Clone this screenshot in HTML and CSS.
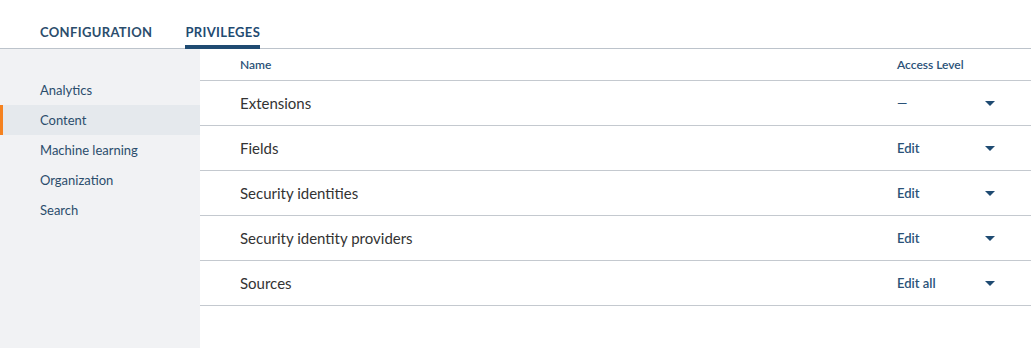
FILE: index.html
```html
<!DOCTYPE html>
<html>
<head>
<meta charset="utf-8">
<link rel="stylesheet" href="styles.css">
</head>
<body>
<div class="tabs">
  <div class="tab">CONFIGURATION</div>
  <div class="tab active">PRIVILEGES</div>
</div>
<div class="main">
  <nav class="side">
    <div class="item">Analytics</div>
    <div class="item active">Content</div>
    <div class="item">Machine learning</div>
    <div class="item">Organization</div>
    <div class="item">Search</div>
  </nav>
  <div class="table">
    <div class="row head">
      <div class="name">Name</div>
      <div class="access">Access Level</div>
    </div>
    <div class="row">
      <div class="name">Extensions</div>
      <div class="access"><span class="val">—</span><span class="caret"></span></div>
    </div>
    <div class="row">
      <div class="name">Fields</div>
      <div class="access"><span class="val">Edit</span><span class="caret"></span></div>
    </div>
    <div class="row">
      <div class="name">Security identities</div>
      <div class="access"><span class="val">Edit</span><span class="caret"></span></div>
    </div>
    <div class="row">
      <div class="name">Security identity providers</div>
      <div class="access"><span class="val">Edit</span><span class="caret"></span></div>
    </div>
    <div class="row">
      <div class="name">Sources</div>
      <div class="access"><span class="val">Edit all</span><span class="caret"></span></div>
    </div>
  </div>
</div>
</body>
</html>
```
FILE: styles.css
```css
* { box-sizing: border-box; }
html, body { margin: 0; height: 100%; }
body {
  font-family: Lato, "Noto Sans", sans-serif;
  background: #fff;
  display: flex;
  flex-direction: column;
  overflow: hidden;
}
.tabs {
  display: flex;
  gap: 33px;
  padding-left: 40px;
  border-bottom: 1px solid #bcc3cb;
  height: 49px;
}
.tab {
  font-size: 13px;
  font-weight: 700;
  line-height: 16px;
  letter-spacing: 0.35px;
  color: #2b4d6c;
  padding-top: 24px;
  height: 49px;
  margin-bottom: -1px;
  border-bottom: 4px solid transparent;
}
.tab.active {
  color: #1f4b72;
  border-bottom-color: #1f4b72;
}
.main {
  flex: 1;
  display: flex;
}
.side {
  width: 200px;
  flex: none;
  background: #f1f2f4;
  padding-top: 26px;
}
.item {
  height: 30px;
  line-height: 30px;
  padding-left: 40px;
  font-size: 13px;
  color: #2b4d6c;
  border-left: 3px solid transparent;
  text-indent: -3px;
}
.item.active {
  background: #e5e9ed;
  border-left-color: #f58220;
}
.table {
  flex: 1;
}
.row {
  display: flex;
  align-items: center;
  height: 45px;
  border-bottom: 1px solid #c4c9cf;
}
.row.head {
  height: 32px;
}
.name {
  flex: 1;
  padding-left: 40px;
  font-size: 15px;
  color: #333;
}
.head .name, .head .access {
  font-size: 12px;
  font-weight: 600;
  color: #2b5278;
}
.access {
  width: 134px;
  display: flex;
  align-items: center;
  font-size: 13px;
  font-weight: 600;
  color: #2a5278;
}
.val {
  width: 88px;
}
.caret {
  width: 0;
  height: 0;
  border-left: 5.5px solid transparent;
  border-right: 5.5px solid transparent;
  border-top: 5px solid #1f4b72;
}
```
